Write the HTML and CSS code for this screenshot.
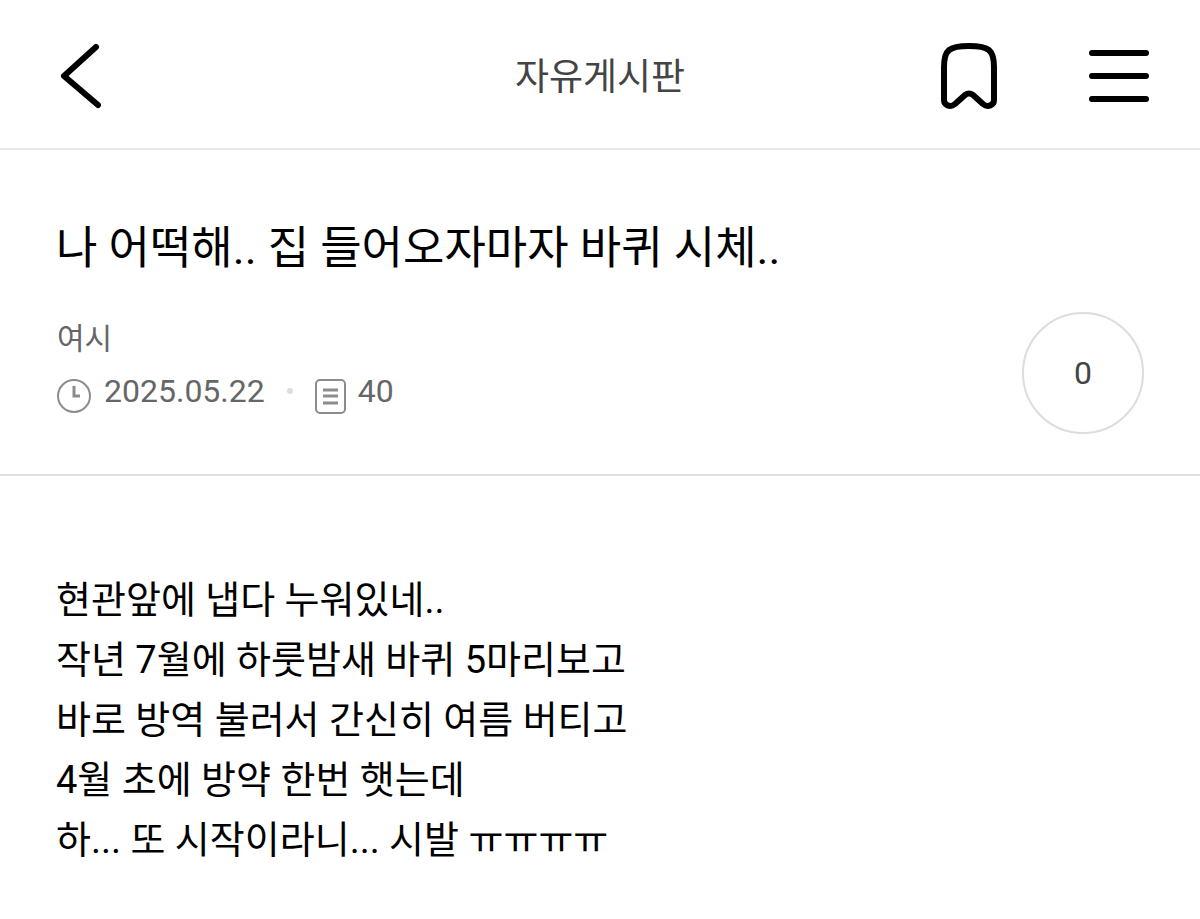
FILE: index.html
```html
<!DOCTYPE html>
<html lang="ko">
<head>
    <meta charset="UTF-8">
    <meta name="viewport" content="width=device-width, initial-scale=1.0">
    <title>자유게시판</title>
    <link rel="stylesheet" href="styles.css">
</head>
<body>
    <header class="topbar">
        <a href="#" class="back" aria-label="뒤로">
            <svg width="54" height="70" viewBox="0 0 54 70"><path d="M45 6L13 35l34 29"/></svg>
        </a>
        <h1 class="board"><a href="#">자유게시판</a></h1>
        <div class="actions">
            <button type="button" aria-label="북마크">
                <svg width="60" height="70" viewBox="0 0 60 70"><path d="M30 5C50 5 55 9 55 26V59C55 64 49 67 44 63L34 54Q30 51 26 54L16 63C11 67 5 64 5 59V26C5 9 10 5 30 5z"/></svg>
            </button>
            <button type="button" aria-label="메뉴">
                <svg width="60" height="70" viewBox="0 0 60 70"><path d="M3 12h54M3 35h54M3 58h54"/></svg>
            </button>
        </div>
    </header>
    <main>
        <section class="post-head">
            <h2>나 어떡해.. 집 들어오자마자 바퀴 시체..</h2>
            <div class="info">
                <div class="details">
                    <p class="author">여시</p>
                    <div class="meta">
                        <svg width="35" height="36" viewBox="0 0 35 36"><circle cx="17" cy="18" r="16"/><path class="thick" d="M17 8v10h6"/></svg>
                        <span>2025.05.22</span>
                        <i class="dot"></i>
                        <svg width="31" height="36" viewBox="0 0 31 36"><rect x="1" y="2" width="29" height="33" rx="4"/><path class="thick" d="M8 12h15M8 18h15M8 25h15"/></svg>
                        <span>40</span>
                    </div>
                </div>
                <a href="#" class="comments">0</a>
            </div>
        </section>
        <article class="content">
            <p>현관앞에 냅다 누워있네..</p>
            <p>작년 7월에 하룻밤새 바퀴 5마리보고</p>
            <p>바로 방역 불러서 간신히 여름 버티고</p>
            <p>4월 초에 방약 한번 햇는데</p>
            <p>하... 또 시작이라니... 시발 ㅠㅠㅠㅠ</p>
        </article>
    </main>
</body>
</html>
```
FILE: styles.css
```css
* {box-sizing: border-box;}
body {margin: 0; background: #fff; color: #000; font-family: Roboto, "Noto Sans CJK KR", sans-serif;}
h1, h2, p {margin: 0; font-weight: 400;}
a {color: inherit; text-decoration: none;}
button {padding: 0; border: 0; background: none;}
svg {display: block; fill: none;}
.topbar {display: grid; grid-template-columns: 1fr auto 1fr; align-items: center; padding: 41px 51px 37px; border-bottom: 2px solid #e8e8e8;}
.topbar svg {stroke: #000; stroke-width: 6; stroke-linecap: round; stroke-linejoin: round;}
.board {padding-top: 4px; font-size: 37px; line-height: 52px; color: #444;}
.actions {display: flex; justify-content: flex-end; gap: 90px;}
.post-head {padding: 66px 56px 40px; border-bottom: 2px solid #e0e0e0;}
.post-head h2 {font-size: 45px; line-height: 66px;}
.info {display: flex; justify-content: space-between; margin-top: 30px;}
.details {padding: 5px 0 0 1px;}
.author {font-size: 30px; line-height: 44px; color: #666;}
.meta {display: flex; align-items: center; margin-top: 6px; font-size: 32px; line-height: 48px; color: #666;}
.meta svg {margin: 10px 12px 0 0; stroke: #8c8c8c; stroke-width: 2;}
.meta .thick {stroke-width: 3;}
.dot {width: 6px; height: 6px; margin: 0 22px; border-radius: 50%; background: #ddd;}
.comments {display: flex; align-items: center; justify-content: center; width: 122px; height: 122px; border: 2px solid #ddd; border-radius: 50%; font-size: 32px; color: #444;}
.content {padding: 94px 56px 40px; font-size: 38px; line-height: 60px;}
```
